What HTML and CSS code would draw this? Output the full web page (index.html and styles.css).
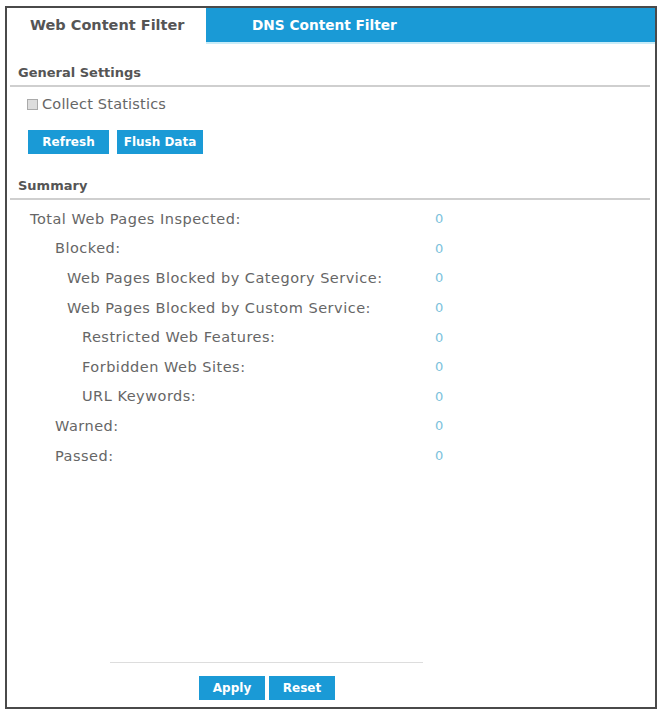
FILE: index.html
```html
<!DOCTYPE html>
<html>
<head>
<meta charset="utf-8">
<link rel="stylesheet" href="styles.css">
</head>
<body>
<div class="frame">
  <div class="tabs">
    <div class="tab tab-active">Web Content Filter</div>
    <div class="tab tab-blue">DNS Content Filter</div>
  </div>

  <div class="section">
    <div class="section-title">General Settings</div>
    <label class="check-row"><span class="checkbox"></span>Collect Statistics</label>
    <div class="btn-row">
      <button class="btn btn-refresh">Refresh</button>
      <button class="btn btn-flush">Flush Data</button>
    </div>
  </div>

  <div class="section">
    <div class="section-title">Summary</div>
    <div class="stats">
      <div class="stat lvl0"><span class="label">Total Web Pages Inspected:</span><span class="val">0</span></div>
      <div class="stat lvl1"><span class="label">Blocked:</span><span class="val">0</span></div>
      <div class="stat lvl2"><span class="label">Web Pages Blocked by Category Service:</span><span class="val">0</span></div>
      <div class="stat lvl2"><span class="label">Web Pages Blocked by Custom Service:</span><span class="val">0</span></div>
      <div class="stat lvl3"><span class="label">Restricted Web Features:</span><span class="val">0</span></div>
      <div class="stat lvl3"><span class="label">Forbidden Web Sites:</span><span class="val">0</span></div>
      <div class="stat lvl3"><span class="label">URL Keywords:</span><span class="val">0</span></div>
      <div class="stat lvl1"><span class="label">Warned:</span><span class="val">0</span></div>
      <div class="stat lvl1"><span class="label">Passed:</span><span class="val">0</span></div>
    </div>
  </div>

  <div class="footer">
    <div class="footer-line"></div>
    <div class="footer-btns">
      <button class="btn btn-wide">Apply</button>
      <button class="btn btn-wide">Reset</button>
    </div>
  </div>
</div>
</body>
</html>
```

FILE: styles.css
```css
html, body {
  margin: 0;
  padding: 0;
  background: #fff;
}

body {
  font-family: "DejaVu Sans", "Liberation Sans", sans-serif;
  color: #555;
}

.frame {
  box-sizing: border-box;
  margin: 6px 0 0 5px;
  width: 652px;
  height: 703px;
  border: 2px solid #4a4a4a;
  display: flex;
  flex-direction: column;
}

/* tab strip */
.tabs {
  display: flex;
  height: 34px;
  border-bottom: 2px solid #fff;
}

.tab {
  display: flex;
  align-items: center;
  font-weight: bold;
}

.tab-active {
  width: 199px;
  padding-left: 23px;
  box-sizing: border-box;
  font-size: 14.5px;
  color: #555;
}

.tab-blue {
  flex: 1;
  background: #1a9ad6;
  color: #fff;
  font-size: 13.7px;
  padding-left: 46px;
  box-shadow: 0 2px 0 #c8ecf8;
}

/* sections */
.section {
  display: flex;
  flex-direction: column;
}

.section-title {
  font-weight: bold;
  font-size: 13px;
  color: #555;
  margin: 0 5px 0 3px;
  padding: 5px 0 0 8px;
  height: 25px;
  line-height: 26px;
  border-bottom: 2px solid #cfcfcf;
}

.tabs + .section .section-title {
  margin-top: 11px;
}

.check-row {
  display: flex;
  align-items: center;
  font-size: 14.5px;
  letter-spacing: 0.2px;
  color: #666;
  margin: 9px 0 0 20px;
  height: 16px;
}

.checkbox {
  box-sizing: border-box;
  width: 11px;
  height: 11px;
  border: 1px solid #aaa;
  background: #ddd;
  margin-right: 4px;
}

.btn-row {
  display: flex;
  gap: 8px;
  margin: 18px 0 0 21px;
}

.btn {
  border: none;
  background: #1a9ad6;
  color: #fff;
  font-family: "DejaVu Sans", "Liberation Sans", sans-serif;
  font-weight: bold;
  font-size: 12px;
  height: 24px;
  padding: 0;
  cursor: pointer;
}

.btn-refresh { width: 81px; }
.btn-flush { width: 86px; }

.section + .section {
  margin-top: 14px;
}

/* summary list */
.stats {
  display: flex;
  flex-direction: column;
  margin-top: 4px;
}

.stat {
  display: flex;
  height: 29.6px;
  align-items: center;
  font-size: 14.5px;
  letter-spacing: 0.5px;
  color: #666;
}

.lvl0 { padding-left: 23px; }
.lvl1 { padding-left: 48px; }
.lvl2 { padding-left: 60px; }
.lvl3 { padding-left: 75px; }

.lvl0 .label { width: 405px; }
.lvl1 .label { width: 380px; }
.lvl2 .label { width: 368px; }
.lvl3 .label { width: 353px; }

.val {
  color: #7cc2dc;
  font-size: 13px;
}

/* bottom action bar */
.footer {
  margin-top: auto;
  display: flex;
  flex-direction: column;
  align-items: flex-start;
  padding-bottom: 7px;
}

.footer-line {
  width: 313px;
  height: 1px;
  background: #ddd;
  margin-left: 103px;
}

.footer-btns {
  display: flex;
  gap: 4px;
  margin-top: 13px;
  margin-left: 192px;
}

.btn-wide {
  width: 66px;
}
```
